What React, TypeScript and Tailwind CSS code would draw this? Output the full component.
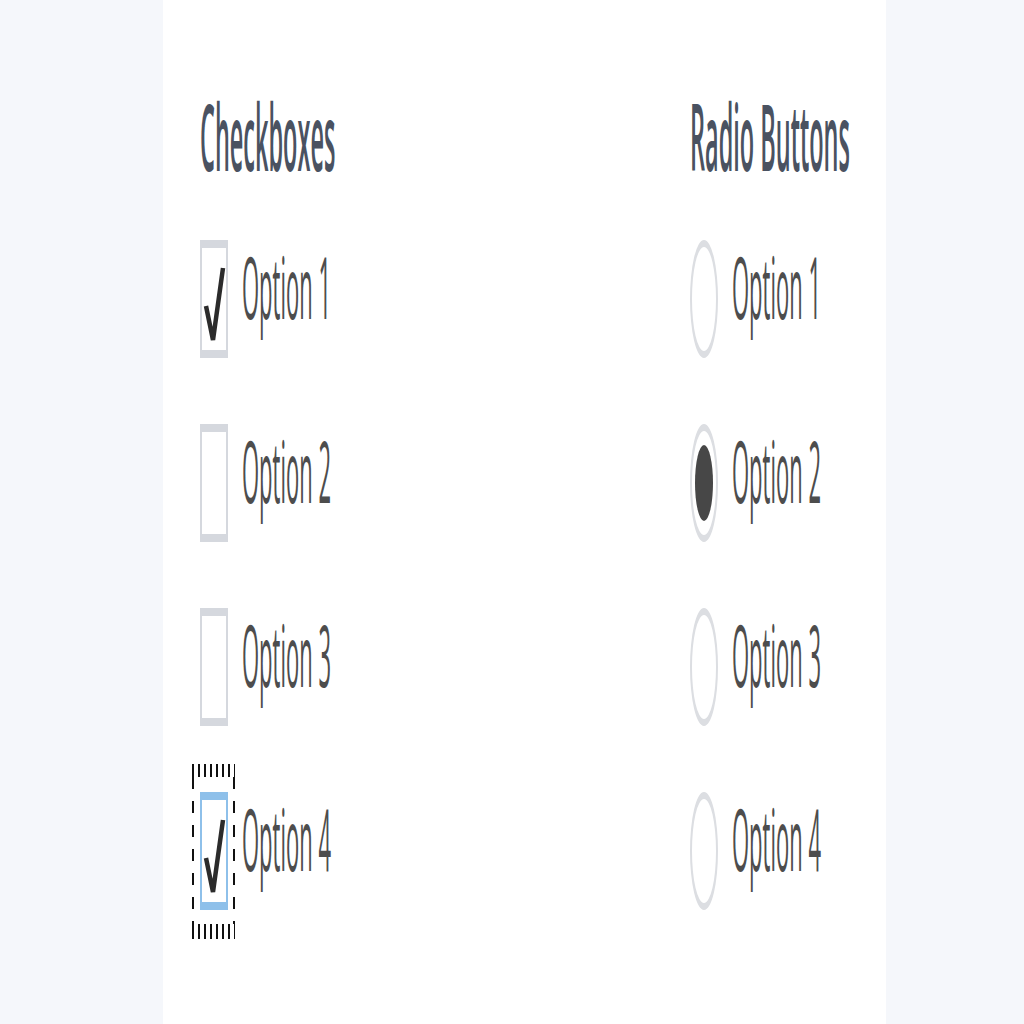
import React from "react";

const options = ["Option 1", "Option 2", "Option 3", "Option 4"];

// checkmark drawn inside the (stretched) checkbox
const Check = () => (
  <svg className="absolute left-0 top-0" width="24" height="102" viewBox="0 0 24 102">
    <path d="M4 58 L11 92 L21 20" fill="none" stroke="#2b2b2b" strokeWidth="4.5" strokeLinejoin="miter" />
  </svg>
);

const Label = ({ text }: { text: string }) => (
  <span className="inline-block origin-center scale-y-[3.9] text-[22px] font-medium leading-none text-[#4d4d4d] font-['Open_Sans',sans-serif] whitespace-nowrap -mt-[30px]">
    {text}
  </span>
);

const Heading = ({ text }: { text: string }) => (
  <div className="flex h-[78px] items-center">
    <span className="inline-block origin-center scale-y-[3.9] text-[23.5px] font-semibold leading-none text-[#4a5261] font-['Open_Sans',sans-serif] whitespace-nowrap">
      {text}
    </span>
  </div>
);

const CheckboxRow = ({ text, index }: { text: string; index: number }) => {
  const checked = index === 0 || index === 3;
  const focused = index === 3;
  return (
    <div className="flex h-[118px] items-center gap-[14px]">
      <div className="relative">
        <div
          className={
            focused
              ? "relative h-[118px] w-[28px] border-x-2 border-y-[8px] border-[#8ec0ea] bg-white"
              : "relative h-[118px] w-[28px] border-x-2 border-y-[8px] border-[#d5d8de] bg-white"
          }
        >
          {checked && <Check />}
        </div>
        {focused && (
          <div className="pointer-events-none absolute -left-[8px] -right-[7px] -top-[28px] -bottom-[29px]">
            <div className="absolute left-0 right-0 top-0 h-[13px] bg-[repeating-linear-gradient(90deg,#111_0_2px,transparent_2px_6px)]" />
            <div className="absolute left-0 right-0 bottom-0 h-[15px] bg-[repeating-linear-gradient(90deg,#111_0_2px,transparent_2px_6px)]" />
            <div className="absolute left-0 top-[13px] bottom-[15px] w-[2px] bg-[repeating-linear-gradient(180deg,#111_0_12px,transparent_12px_24px)]" />
            <div className="absolute right-0 top-[13px] bottom-[15px] w-[2px] bg-[repeating-linear-gradient(180deg,#111_0_12px,transparent_12px_24px)]" />
          </div>
        )}
      </div>
      <Label text={text} />
    </div>
  );
};

const RadioRow = ({ text, index }: { text: string; index: number }) => (
  <div className="flex h-[118px] items-center gap-[14px]">
    <div className="flex h-[118px] w-[28px] items-center justify-center rounded-[50%] border-x-2 border-y-[7px] border-[#dcdee2] bg-white">
      {index === 1 && <div className="h-[76px] w-[18px] rounded-[50%] bg-[#474747]" />}
    </div>
    <Label text={text} />
  </div>
);

export default function App() {
  return (
    <div className="flex h-[1024px] w-full overflow-hidden bg-[#f5f7fb]">
      <div className="ml-[163px] h-[1024px] w-[723px] bg-white pl-[37px] pt-[100px]">
        <div className="grid grid-cols-[490px_1fr]">
          <div className="flex flex-col">
            <Heading text="Checkboxes" />
            <div className="mt-[62px] flex flex-col gap-[66px]">
              {options.map((o, i) => (
                <CheckboxRow key={o} text={o} index={i} />
              ))}
            </div>
          </div>
          <div className="flex flex-col">
            <Heading text="Radio Buttons" />
            <div className="mt-[62px] flex flex-col gap-[66px]">
              {options.map((o, i) => (
                <RadioRow key={o} text={o} index={i} />
              ))}
            </div>
          </div>
        </div>
      </div>
    </div>
  );
}
